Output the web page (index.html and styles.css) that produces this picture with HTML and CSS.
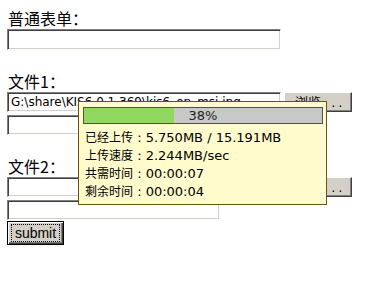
FILE: index.html
```html
<!DOCTYPE html>
<html>
<head>
<meta charset="utf-8">
<link rel="stylesheet" href="styles.css">
</head>
<body>
<form class="form">
  <div class="label first">普通表单：</div>
  <input class="text wide" type="text">
  <div class="label">文件1：</div>
  <div class="file">
    <div class="text wide path">G:\share\KIS6.0.1.369\kis6_op_msi.jpg</div>
    <button type="button" class="btn browse">浏览<span class="dots">...</span></button>
  </div>
  <input class="text narrow" type="text">
  <div class="label">文件2：</div>
  <div class="file">
    <div class="text wide path"></div>
    <button type="button" class="btn browse">浏览<span class="dots">...</span></button>
  </div>
  <input class="text narrow" type="text">
  <div class="submit-wrap"><button type="button" class="submit"><span class="focus">submit</span></button></div>

  <div class="popup">
    <div class="bar">
      <div class="fill" style="width:38%"></div>
      <span class="pct">38%</span>
    </div>
    <div class="rows">
      <div class="row"><span class="k">已经上传</span><span class="v"> : 5.750MB / 15.191MB</span></div>
      <div class="row"><span class="k">上传速度</span><span class="v"> : 2.244MB/sec</span></div>
      <div class="row"><span class="k">共需时间</span><span class="v"> : 00:00:07</span></div>
      <div class="row"><span class="k">剩余时间</span><span class="v"> : 00:00:04</span></div>
    </div>
  </div>
</form>
</body>
</html>
```

FILE: styles.css
```css
html, body {
  margin: 0;
  padding: 0;
  background: #ffffff;
}

.form {
  position: relative;
  margin: 0;
  padding: 8px 0 0 7px;
  font-family: "Noto Sans CJK SC", sans-serif;
  color: #000;
}

.label {
  font-size: 16px;
  line-height: 20px;
  height: 20px;
  padding-left: 1px;
  margin-top: 21px;
}

.label.first {
  margin-top: 0;
}

.text {
  display: block;
  box-sizing: border-box;
  margin: 0;
  padding: 0 0 0 2px;
  background: #fff;
  border: 1px solid;
  border-color: #808080 #ffffff #ffffff #808080;
  box-shadow: inset 1px 1px 0 #404040, inset -1px -1px 0 #d4d0c8;
  outline: none;
}

input.wide {
  width: 274px;
  height: 21px;
  margin-top: 1px;
}

.narrow {
  width: 213px;
  height: 20px;
  margin-top: 3px;
}

.file {
  display: flex;
  align-items: flex-start;
  gap: 3px;
  margin-top: 1px;
}

.path {
  width: 274px;
  height: 20px;
  font-family: "DejaVu Sans", sans-serif;
  font-size: 12px;
  line-height: 18px;
  padding-left: 3px;
  white-space: nowrap;
  overflow: hidden;
}

.btn {
  box-sizing: border-box;
  height: 20px;
  width: 68px;
  margin: 0;
  padding: 0 0 0 10px;
  text-align: left;
  background: #d4d0c8;
  border: 1px solid;
  border-color: #ffffff #404040 #404040 #ffffff;
  box-shadow: inset -1px -1px 0 #808080;
  font-family: "Noto Sans CJK SC", sans-serif;
  font-size: 13px;
  line-height: 17px;
  color: #000;
}

.dots {
  font-family: "DejaVu Sans", sans-serif;
  letter-spacing: 3px;
  margin-left: 3px;
}

.submit-wrap {
  margin-top: 1px;
}

.submit {
  box-sizing: border-box;
  width: 57px;
  height: 24px;
  margin: 0;
  padding: 2px 3px;
  background: #d4d0c8;
  border: 1px solid #000;
  box-shadow: inset 1px 1px 0 #ffffff, inset -1px -1px 0 #404040, inset -2px -2px 0 #808080;
  font-family: "Liberation Sans", sans-serif;
  font-size: 14px;
  line-height: 16px;
  color: #000;
  display: block;
}

.focus {
  display: block;
  border: 1px dotted #000;
  height: 16px;
  line-height: 16px;
}

.popup {
  position: absolute;
  left: 78px;
  top: 101px;
  box-sizing: border-box;
  width: 249px;
  height: 104px;
  background: #fffbcc;
  border: 1px solid #6e5210;
  padding: 5px 3px 0 4px;
}

.bar {
  position: relative;
  box-sizing: border-box;
  width: 240px;
  height: 17px;
  background: #c8c8c8;
  border: 1px solid #505050;
}

.fill {
  height: 100%;
  background: #8fd75f;
}

.pct {
  position: absolute;
  left: 0;
  right: 0;
  top: 0;
  text-align: center;
  font-family: "DejaVu Sans", sans-serif;
  font-size: 13px;
  line-height: 15px;
  color: #222;
}

.rows {
  margin-top: 2px;
  padding-left: 2px;
}

.row {
  height: 18px;
  line-height: 18px;
  white-space: nowrap;
}

.k {
  font-family: "Noto Sans CJK SC", sans-serif;
  font-size: 12px;
}

.v {
  font-family: "DejaVu Sans", sans-serif;
  font-size: 13px;
  white-space: pre;
}
```
